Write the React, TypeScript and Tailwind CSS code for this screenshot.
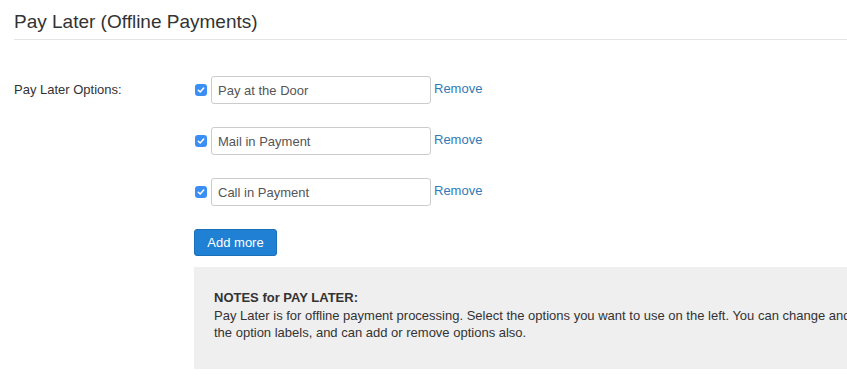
const options = ["Pay at the Door", "Mail in Payment", "Call in Payment"];

function CheckIcon() {
  return (
    <span className="flex h-[12px] w-[12px] shrink-0 items-center justify-center rounded-[3px] bg-[#3b8ef3]">
      <svg width="8" height="8" viewBox="0 0 8 8" fill="none">
        <path d="M1.3 4.2 3.2 6 6.7 2" stroke="white" strokeWidth="1.5" strokeLinecap="round" strokeLinejoin="round" />
      </svg>
    </span>
  );
}

export default function App() {
  return (
    <div className="h-[380px] w-[847px] overflow-hidden bg-white text-[13px] text-[#333] [font-family:'Liberation_Sans',Arial,sans-serif]">
      {/* Header */}
      <div className="ml-[14px] border-b border-[#e5e5e5] pt-[11px] pb-[6px]">
        <h2 className="text-[19px] leading-[22px] text-[#333]">Pay Later (Offline Payments)</h2>
      </div>

      {/* Options row */}
      <div className="mt-[36px] flex">
        <div className="w-[194px] shrink-0 pl-[14px] pt-[6px] leading-[16px]">Pay Later Options:</div>
        <div className="flex flex-col">
          <div className="flex flex-col gap-[23px]">
            {options.map((o) => (
              <div key={o} className="flex items-start">
                <div className="flex h-[28px] items-center pl-[1px]">
                  <CheckIcon />
                </div>
                <input
                  defaultValue={o}
                  className="ml-[4px] h-[28px] w-[220px] rounded-[3px] border border-[#ccc] px-[6px] text-[13px] text-[#555] outline-none"
                />
                <a className="ml-[3px] mt-[5px] leading-[15px] text-[#337ab7]">Remove</a>
              </div>
            ))}
          </div>
          <button className="mt-[23px] h-[27px] w-[83px] rounded-[3px] border border-[#1a6fb8] bg-[#1f80d4] text-[13px] text-white">
            Add more
          </button>
          <div className="mt-[11px] h-[102px] w-[700px] bg-[#efefef] px-[20px] pt-[22px] leading-[17px]">
            <div className="font-bold">NOTES for PAY LATER:</div>
            <div className="mt-[1px] whitespace-nowrap">
              Pay Later is for offline payment processing. Select the options you want to use on the left. You can change and edit
            </div>
            <div>the option labels, and can add or remove options also.</div>
          </div>
        </div>
      </div>
    </div>
  );
}
